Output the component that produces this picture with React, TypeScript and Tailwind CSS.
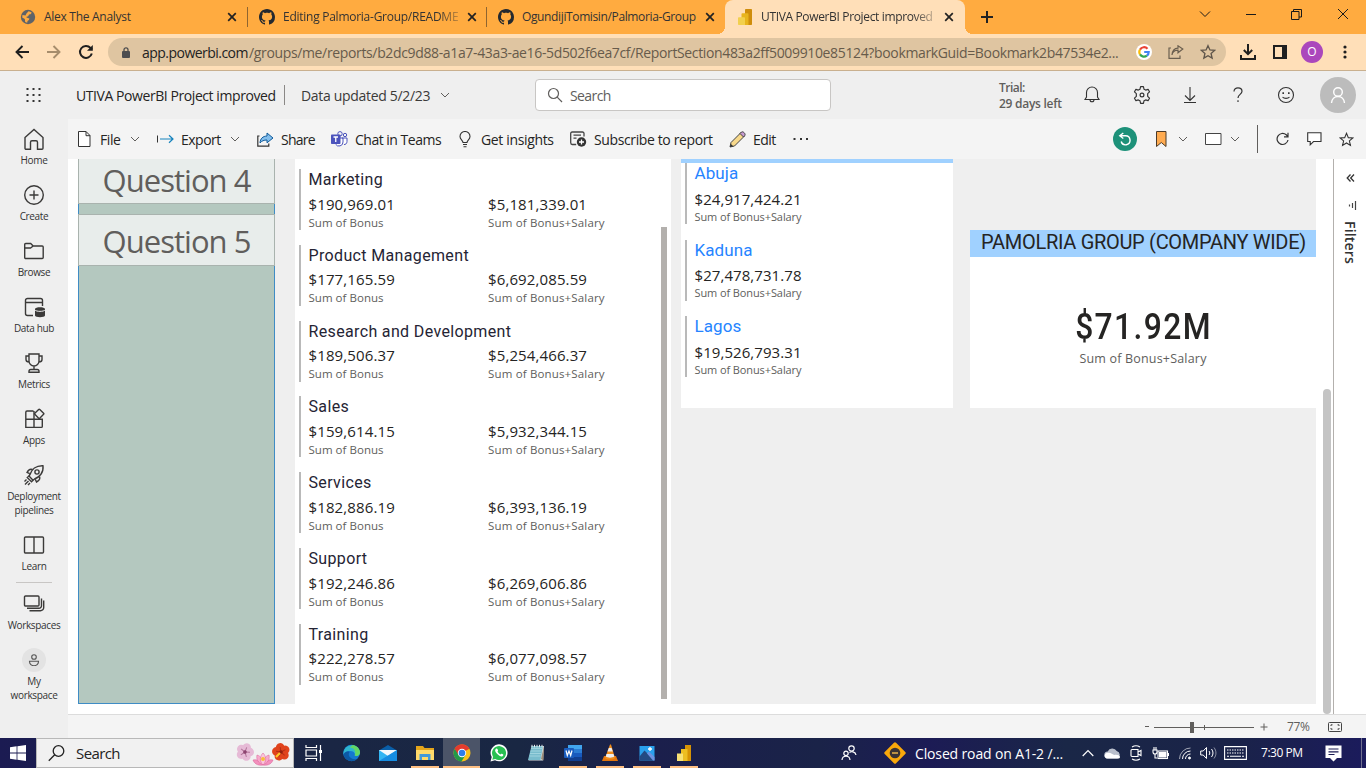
import type { ReactNode } from "react";

type IconProps = { className?: string; size?: number; w?: number; children: ReactNode; box?: string };

/** Stroke icon on a 24-unit grid. */
function Icon({ className = "", size = 20, w = 1.5, box = "0 0 24 24", children }: IconProps) {
  return (
    <svg
      width={size}
      height={size}
      viewBox={box}
      fill="none"
      stroke="currentColor"
      strokeWidth={w}
      className={`shrink-0 ${className}`}
    >
      {children}
    </svg>
  );
}

function Chevron({ className = "" }: { className?: string }) {
  return (
    <svg width="10" height="10" viewBox="0 0 10 10" fill="none" stroke="#605e5c" className={`shrink-0 ${className}`}>
      <path d="M1 3l4 4 4-4" />
    </svg>
  );
}

/* ---------- Browser chrome ---------- */

function GithubMark() {
  return (
    <svg width="16" height="16" viewBox="0 0 16 16" fill="#24292f" className="shrink-0">
      <path d="M8 0C3.58 0 0 3.58 0 8c0 3.54 2.29 6.53 5.47 7.59.4.07.55-.17.55-.38 0-.19-.01-.82-.01-1.49-2.01.37-2.53-.49-2.69-.94-.09-.23-.48-.94-.82-1.13-.28-.15-.68-.52-.01-.53.63-.01 1.08.58 1.23.82.72 1.21 1.87.87 2.33.66.07-.52.28-.87.51-1.07-1.78-.2-3.64-.89-3.64-3.95 0-.87.31-1.59.82-2.15-.08-.2-.36-1.02.08-2.12 0 0 .67-.21 2.2.82.64-.18 1.32-.27 2-.27s1.36.09 2 .27c1.53-1.04 2.2-.82 2.2-.82.44 1.1.16 1.92.08 2.12.51.56.82 1.27.82 2.15 0 3.07-1.87 3.75-3.65 3.95.29.25.54.73.54 1.48 0 1.07-.01 1.93-.01 2.2 0 .21.15.46.55.38A8.01 8.01 0 0 0 16 8c0-4.42-3.58-8-8-8z" />
    </svg>
  );
}

function Globe() {
  return (
    <svg width="16" height="16" viewBox="0 0 16 16" className="shrink-0">
      <circle cx="8" cy="8" r="7.200" fill="#5f6368" />
      <path d="M8.500 2.200c1 .2 2.500.7 3.300 1.600L10.500 5.200 9 5.600l-.8 1.600L6 8l1.700 1 1.700.4-.5 1.600-1.400 1.100-.3 1.700-2-.8L4.800 10 2.200 8.500 2.500 6l3 .4 1-1.800z" fill="#ffab40" />
    </svg>
  );
}

function PowerBi() {
  return (
    <svg width="18" height="18" viewBox="0 0 18 18" className="shrink-0">
      <rect x="9" y="1" width="7" height="16" rx=".8" fill="#cf8d0b" />
      <path d="M5.500 6a.8.8 0 0 1 .8-.8h5.400a.8.8 0 0 1 .8.8v11h-7z" fill="#e8b41d" />
      <path d="M2 10a.8.8 0 0 1 .8-.8h5.400a.8.8 0 0 1 .8.800v7H2.800a.8.800 0 0 1-.8-.8z" fill="#f2d04e" />
    </svg>
  );
}

function CloseX() {
  return (
    <svg width="10" height="10" viewBox="0 0 10 10" stroke="#222" strokeWidth="1.700" className="shrink-0">
      <path d="M1.200 1.200l7.600 7.600M8.800 1.200L1.200 8.800" />
    </svg>
  );
}

const tabText = "ml-[8px] whitespace-nowrap text-[12px] text-[#333333]";

function TabStrip() {
  return (
    <div className="flex h-[34px] items-start bg-[#ffab40]">
      <div className="flex h-[34px] w-[247px] items-center pl-5">
        <Globe />
        <span className={`${tabText} w-[183px] tracking-[-0.28px]`}>Alex The Analyst</span>
        <CloseX />
      </div>
      <div className="mt-[7px] h-5 w-px bg-[#8f6530]" />
      <div className="flex h-[34px] w-[238px] items-center pl-[11px]">
        <GithubMark />
        <span className={`${tabText} w-[176px] tracking-[-0.26px] [mask-image:linear-gradient(to_right,#000_88%,#0004)]`}>
          Editing Palmoria-Group/README
        </span>
        <span className="ml-[8px] flex"><CloseX /></span>
      </div>
      <div className="mt-[7px] h-5 w-px bg-[#8f6530]" />
      <div className="flex h-[34px] w-[238px] items-center rounded-br-[8px] pl-[11px]">
        <GithubMark />
        <span className={`${tabText} w-[175px] tracking-[-0.37px]`}>OgundijiTomisin/Palmoria-Group</span>
        <span className="ml-[8px] flex"><CloseX /></span>
      </div>
      <div className="relative flex h-[34px] w-[240px] items-center rounded-t-[8px] bg-[#ffdfb8] pl-[11px]">
        <span className="absolute bottom-0 -left-2 size-2 bg-[radial-gradient(circle_at_0_0,#ffab40_8px,#ffdfb8_8px)]" />
        <span className="absolute -right-2 bottom-0 size-2 bg-[radial-gradient(circle_at_100%_0,#ffab40_8px,#ffdfb8_8px)]" />
        <PowerBi />
        <span className="ml-[7px] w-[172px] whitespace-nowrap text-[12px] tracking-[-0.35px] text-[#333333] [mask-image:linear-gradient(to_right,#000_88%,#0005)]">
          UTIVA PowerBI Project improved
        </span>
        <span className="ml-[11px] flex"><CloseX /></span>
      </div>
      <svg width="12" height="12" viewBox="0 0 12 12" stroke="#222" strokeWidth="2" className="mt-[11px] ml-4">
        <path d="M6 0v12M0 6h12" />
      </svg>
      <div className="ml-auto flex h-7 items-center pr-[17px] text-[#1a1a1a]">
        <svg width="12" height="12" viewBox="0 0 12 12" fill="none" stroke="currentColor"><path d="M1 3.500l5 5 5-5" /></svg>
        <svg width="10" height="10" viewBox="0 0 10 10" stroke="currentColor" className="ml-[35px]"><path d="M0 5.500h10" /></svg>
        <svg width="11" height="11" viewBox="0 0 11 11" fill="none" stroke="currentColor" className="ml-[35px]"><path d="M.5 2.500h7.500v8H.5zM2.500 2.500v-2h8v7.500H8" /></svg>
        <svg width="12" height="12" viewBox="0 0 12 12" stroke="currentColor" className="ml-[35px]"><path d="M1 1l10 10M11 1L1 11" /></svg>
      </div>
    </div>
  );
}

function GoogleG() {
  return (
    <span className="flex size-4 items-center justify-center rounded-full bg-white">
      <svg width="12" height="12" viewBox="0 0 12 12" fill="none" strokeWidth="2.200">
        <path d="M9.500 2.700A4.700 4.700 0 0 0 2 3.600" stroke="#ea4335" />
        <path d="M2 3.600a4.700 4.700 0 0 0 0 4.800" stroke="#fbbc05" />
        <path d="M2 8.400a4.700 4.700 0 0 0 6.900 1.300" stroke="#34a853" />
        <path d="M8.900 9.700A4.700 4.700 0 0 0 10.700 6H6.200" stroke="#4285f4" />
      </svg>
    </span>
  );
}

function AddressBar() {
  return (
    <div className="flex h-[37px] items-center border-b border-[#c9b08f] bg-[#ffdfb8] pl-[15px]">
      <svg width="14" height="14" viewBox="0 0 14 14" fill="none" stroke="#1f1f1f" strokeWidth="1.900"><path d="M14 7H1.500M7.500 1L1.500 7l6 6" /></svg>
      <svg width="14" height="14" viewBox="0 0 14 14" fill="none" stroke="#a68d6c" strokeWidth="1.900" className="ml-[18px]"><path d="M0 7h12.500M6.500 1l6 6-6 6" /></svg>
      <svg width="16" height="16" viewBox="0 0 16 16" fill="none" stroke="#1f1f1f" strokeWidth="2" className="ml-[17px]">
        <path d="M13.800 9.500A6 6 0 1 1 12.500 3.900L14 5.500" />
        <path d="M14.800 1v5.800H9z" fill="#1f1f1f" stroke="none" />
      </svg>
      <div className="ml-[14px] flex h-7 w-[1118px] items-center rounded-full bg-[#dfc5a1] pl-[14px] text-[14px] text-[#675b4b]">
        <svg width="8" height="11" viewBox="0 0 8 11" className="shrink-0">
          <rect y="4" width="8" height="7" rx="1" fill="#4d4d4f" />
          <path d="M2 4.500V2.800a2 2 0 0 1 4 0v1.700" fill="none" stroke="#4d4d4f" strokeWidth="1.300" />
        </svg>
        <span className="ml-3 w-[107px] whitespace-nowrap tracking-[-0.53px] text-[#222]">app.powerbi.com</span>
        <span className="w-[883px] whitespace-nowrap tracking-[-0.355px]">
          /groups/me/reports/b2dc9d88-a1a7-43a3-ae16-5d502f6ea7cf/ReportSection483a2ff5009910e85124?bookmarkGuid=Bookmark2b47534e2...
        </span>
        <span className="ml-[4px]"><GoogleG /></span>
        <svg width="16" height="14" viewBox="0 0 16 14" fill="none" stroke="#6b5f4f" strokeWidth="1.200" className="ml-4 shrink-0">
          <path d="M3 3H1v10.300h11V10.500M4 10c.3-3 2.500-4.700 6-4.800V7.800L14.800 4 10 .8v2.300C6.300 3.300 4.300 5.800 4 10z" />
        </svg>
        <Icon size={16} w={2} className="ml-4 text-[#5f554a]">
          <path d="M12 2.500l2.900 6.400 7 .7-5.300 4.600 1.600 6.900L12 17.500l-6.200 3.600 1.600-6.900L2.100 9.600l7-.7z" />
        </Icon>
      </div>
      <svg width="16" height="16" viewBox="0 0 16 16" fill="none" stroke="#1f1f1f" strokeWidth="2" className="ml-[14px]">
        <path d="M8 0v10M3.800 6L8 10.200 12.200 6M1 11v4h14v-4" />
      </svg>
      <svg width="14" height="14" viewBox="0 0 14 14" className="ml-[17px]">
        <path d="M1 1h12v12H1z" fill="none" stroke="#1f1f1f" strokeWidth="2" /><path d="M9 1h5v12H9z" fill="#1f1f1f" />
      </svg>
      <span className="ml-[14px] flex size-[22px] items-center justify-center rounded-full bg-[#ab47bc] text-[12px] text-white">O</span>
      <svg width="4" height="14" viewBox="0 0 4 14" fill="#1f1f1f" className="ml-5"><circle cx="2" cy="2" r="1.600" /><circle cx="2" cy="7" r="1.600" /><circle cx="2" cy="12" r="1.600" /></svg>
    </div>
  );
}

/* ---------- Power BI header and bars ---------- */

function AppHeader() {
  return (
    <div className="flex h-12 shrink-0 items-center bg-[#efefef] text-[14px] text-[#252423]">
      <svg width="15" height="15" viewBox="0 0 15 15" fill="#333" className="ml-[26px] shrink-0">
        {[0, 6, 12].map((y) => [0, 6, 12].map((x) => <rect key={`${x}-${y}`} x={x + 0.500} y={y} width="2" height="2" />))}
      </svg>
      <span className="ml-[35px] w-[208px] whitespace-nowrap tracking-[-0.43px]">UTIVA PowerBI Project improved</span>
      <span className="h-5 w-px bg-[#8a8886]" />
      <span className="ml-4 w-[139px] whitespace-nowrap tracking-[-0.32px] text-[#3b3a39]">Data updated 5/2/23</span>
      <Chevron />
      <div className="ml-[85px] flex h-8 w-[296px] items-center rounded border border-[#c8c6c4] bg-white pl-[11px] text-[#605e5c]">
        <Icon size={16} w={1.200} box="0 0 16 16"><circle cx="6.500" cy="6.500" r="5" /><path d="M10.200 10.200l4.800 4.800" /></Icon>
        <span className="ml-[7px] tracking-[-0.6px]">Search</span>
      </div>
      <div className="mt-0.5 ml-[168px] w-[84px] text-[12px] leading-4 font-semibold text-[#605e5c]">
        <p className="tracking-[-0.5px]">Trial:</p>
        <p className="tracking-[-0.27px]">29 days left</p>
      </div>
      <Icon size={18} w={1.100} box="0 0 18 18" className="text-[#333]"><path d="M2 13.500h14L14.500 11V6.500a5.500 5.500 0 0 0-11 0V11zM7 13.700a2 2 0 0 0 4 0" /></Icon>
      <Icon size={20} w={1.400} className="ml-[31px] text-[#333]">
        <path d="M10.300 2h3.400l.7 3 2 1.100 2.900-.9 1.700 3-2.200 2.100v3.400l2.200 2.100-1.700 3-2.900-.9-2 1.100-.7 3h-3.400l-.7-3-2-1.100-2.900.9-1.700-3 2.200-2.100v-3.400L3 8.200l1.700-3 2.900.9 2-1.100z" strokeLinejoin="round" />
        <circle cx="12" cy="12" r="2.300" />
      </Icon>
      <Icon size={18} w={1.100} box="0 0 18 18" className="ml-[29px] text-[#333]"><path d="M9 1v13M4 9.500l5 5 5-5M3 16.500h12" /></Icon>
      <Icon size={18} w={1.200} box="0 0 18 18" className="ml-[30px] text-[#333]"><path d="M5 5.500C5 3 6.800 1.800 9 1.800s4 1.300 4 3.500c0 3-4 3.300-4 6.700M9 14.300v1.800" /></Icon>
      <Icon size={18} w={1.100} box="0 0 18 18" className="ml-[30px] text-[#333]"><circle cx="9" cy="9" r="7.500" /><path d="M5.500 11c1.500 1.800 5.500 1.800 7 0" /><path d="M6.200 6.200v1.700M11.800 6.200v1.700" strokeWidth="1.600" /></Icon>
      <span className="ml-[25px] flex size-9 items-center justify-center rounded-full bg-[#bcbcbc] text-white">
        <Icon size={18} w={1.400} box="0 0 18 18"><circle cx="9" cy="6" r="4.300" /><path d="M2.500 17c.3-4 3-6.500 6.500-6.500s6.200 2.500 6.500 6.500" /></Icon>
      </span>
    </div>
  );
}

function ActionBar() {
  return (
    <div className="flex h-10 shrink-0 items-center bg-[#f4f4f4] pl-2.5 text-[14px] whitespace-nowrap text-[#252423]">
      <svg width="13" height="16" viewBox="0 0 13 16" fill="#fff" stroke="#333" className="shrink-0"><path d="M.5.5h7.500l4 4v11H.5zM8 .5v4.200h4" /></svg>
      <span className="ml-[9px] w-[30px] tracking-[-0.39px]">File</span>
      <Chevron />
      <svg width="17" height="10" viewBox="0 0 17 10" fill="none" className="ml-[17px] shrink-0"><path d="M.5 1.500v7" stroke="#333" /><path d="M3 5h13M12 1.200L16 5l-4 3.800" stroke="#1683bd" strokeWidth="1.200" /></svg>
      <span className="ml-[7px] w-[49px] tracking-[-0.5px]">Export</span>
      <Chevron />
      <svg width="17" height="15" viewBox="0 0 17 15" className="ml-[17px] shrink-0">
        <path d="M2.500 4H.8v10.200h11V11.500" fill="none" stroke="#333" strokeWidth="1.200" />
        <path d="M3 11C3.300 6.500 5.800 4.200 10 4V1l6 5-6 4.800V8C7 8 4.800 8.800 3 11z" fill="#83beec" stroke="#0f5a9a" />
      </svg>
      <span className="ml-[7px] w-[50px] tracking-[-0.75px]">Share</span>
      <svg width="17" height="16" viewBox="0 0 17 16" className="shrink-0">
        <circle cx="14" cy="4" r="1.700" fill="none" stroke="#4b53bc" /><circle cx="9" cy="2.800" r="2.200" fill="#f4f4f4" stroke="#4b53bc" />
        <path d="M11 7h5v3.500c0 2-1.500 3.200-3 3M4 7h8v4a4 4 0 0 1-7.500 2" fill="#fff" stroke="#4b53bc" />
        <rect y="3.500" width="9.500" height="9.500" rx=".8" fill="#4b53bc" /><path d="M2.500 6h4.500M4.750 6v5" stroke="#fff" strokeWidth="1.300" />
      </svg>
      <span className="ml-[7px] w-[104px] tracking-[-0.5px]">Chat in Teams</span>
      <svg width="12" height="17" viewBox="0 0 12 17" fill="none" stroke="#333" strokeWidth="1.100" className="shrink-0"><path d="M4 11.500C4 9.500 1 8.500 1 5.500a5 5 0 0 1 10 0c0 3-3 4-3 6zM4 13.500h4M4.500 15.800h3" /></svg>
      <span className="ml-[10px] w-[89px] tracking-[-0.35px]">Get insights</span>
      <svg width="17" height="16" viewBox="0 0 17 16" fill="none" stroke="#444" strokeWidth="1.300" className="shrink-0">
        <path d="M14 5.500V2.500a1.500 1.500 0 0 0-1.500-1.500H2A1.500 1.500 0 0 0 .7 2.500v9c0 1 .6 2 1.500 2h4M3.500 4.200h7.500M3.500 7.200h3" />
        <circle cx="11.500" cy="11" r="4.700" fill="#333" stroke="none" /><path d="M11.500 8.500v5M9 11h5" stroke="#fff" />
      </svg>
      <span className="ml-[7px] w-[135px] tracking-[-0.38px]">Subscribe to report</span>
      <svg width="17" height="17" viewBox="0 0 17 17" className="shrink-0">
        <path d="M1 16l1-4.500L12 1.500l3.500 3.500-10 10z" fill="#f8d98b" stroke="#444" /><path d="M11 2.500l1.500-1.500c1.500-1 4.500 1.800 3.300 3.500L14.500 6z" fill="#c79bd0" stroke="#444" /><path d="M1 16l.7-3.300 2.600 2.600z" fill="#333" />
      </svg>
      <span className="ml-[7px] w-[40px] tracking-[-0.55px]">Edit</span>
      <svg width="16" height="4" viewBox="0 0 16 4" fill="#333" className="shrink-0"><rect x=".5" y="1" width="2" height="2" /><rect x="7" y="1" width="2" height="2" /><rect x="13" y="1" width="2" height="2" /></svg>
      <div className="ml-auto flex h-full items-center pr-3">
        <span className="flex size-6 items-center justify-center rounded-full bg-[#1d9179]">
          <svg width="14" height="14" viewBox="0 0 14 14" fill="none" stroke="#fff" strokeWidth="1.400"><path d="M5.300 1L1.800 3.800l3.500 2.700M2 3.800h5.500a4.500 4.500 0 1 1-4.300 5.700" /></svg>
        </span>
        <svg width="11" height="17" viewBox="0 0 11 17" className="ml-[19px]"><path d="M.5.500h9.500v15l-4.700-4-4.800 4z" fill="#ffab50" stroke="#4b3a28" /></svg>
        <Chevron className="ml-[11px]" />
        <svg width="17" height="12" viewBox="0 0 17 12" fill="#fff" stroke="#444" className="ml-[17px]"><path d="M.5.5h15.500v11H.5z" /></svg>
        <Chevron className="ml-2" />
        <span className="ml-[17px] h-7 w-px bg-[#605e5c]" />
        <svg width="13" height="14" viewBox="0 0 13 14" fill="none" stroke="#333" strokeWidth="1.200" className="ml-[18px]"><path d="M12 8a5.500 5.500 0 1 1-1.800-5.200L12 4.500M12 .8v4H8" /></svg>
        <svg width="15" height="14" viewBox="0 0 15 14" fill="#fff" stroke="#333" strokeWidth="1.100" className="ml-[18px]"><path d="M.7.700h13.300v8.800H6.500L3.200 12.800V9.500H.7z" /></svg>
        <Icon size={15} w={1.700} className="ml-[17px] text-[#333]"><path d="M12 2l2.900 7 7.300.5-5.600 4.800 1.700 7.200L12 17.500l-6.300 4 1.700-7.200L1.800 9.500 9.100 9z" /></Icon>
      </div>
    </div>
  );
}

/* ---------- Left navigation ---------- */

const navIcons = {
  home: <path d="M2 9.500L11 1.500l9 8v10.700a1 1 0 0 1-1 1H14.500v-7a1.500 1.500 0 0 0-1.500-1.500H9a1.500 1.500 0 0 0-1.500 1.500v7H3a1 1 0 0 1-1-1z" />,
  create: <><circle cx="11" cy="11" r="9.300" /><path d="M11 6.500v9M6.500 11h9" /></>,
  browse: <path d="M1.700 17.500v-13a1 1 0 0 1 1-1h5l2.500 2.500h9a1 1 0 0 1 1 1v10.500a1 1 0 0 1-1 1H2.700a1 1 0 0 1-1-1zM1.700 8h5.800l2.700-2" />,
  data: <><path d="M19.500 10V4.500A2 2 0 0 0 17.500 2.500h-13a2 2 0 0 0-2 2v13a2 2 0 0 0 2 2H10M2.500 6.500h17" /><path d="M12 13c0-2.300 10-2.300 10 0v6.500c0 2.300-10 2.300-10 0z" fill="currentColor" stroke="none" /><path d="M12 14c1 1.800 9 1.800 10 0" stroke="#efefef" strokeWidth="1" /></>,
  metrics: <path d="M6 2h10v7a5 5 0 0 1-10 0zM6 4H3v3.500C3 9.500 4.500 10 6.300 10M16 4h3v3.500c0 2-1.500 2.500-3.300 2.500M11 14v3.500M6 20.300v-1a1.800 1.800 0 0 1 1.800-1.800h6.400a1.800 1.800 0 0 1 1.800 1.800v1z" />,
  apps: <><path d="M10.500 3H4a1.200 1.200 0 0 0-1.200 1.200v15.200h15.500a1 1 0 0 0 1-1v-7.200H2.800M11 3v16.400" /><rect x="12.700" y="2.300" width="7" height="7" rx=".8" transform="rotate(45 16.200 5.800)" fill="#efefef" /></>,
  rocket: <>
    <path d="M7 10.500C8.500 5.500 13 1.500 20 1.800c.8 6.700-3.500 11.500-8.500 13.200L10 16.200 6 12z" />
    <path d="M9.500 5.500C7 4.500 5.500 5.500 4 8.500L6.800 9.700M16.500 12.500c1 2.500 0 4-3 5.500l-1.200-2.800M6 12l-1.700 1.500L8.500 17.700 10 16.200" />
    <path d="M3.500 15.500l-2 2M5.500 17L2 20.500M7 19l-2 2" /><circle cx="14" cy="8" r="2.100" />
  </>,
  learn: <path d="M1.500 4a1 1 0 0 1 1-1H11v16H2.500a1 1 0 0 1-1-1zM11 3h8.500a1 1 0 0 1 1 1v14a1 1 0 0 1-1 1H11zM11 3v16" />,
  spaces: <path d="M1.500 4a1 1 0 0 1 1-1H15a1 1 0 0 1 1 1v8a1 1 0 0 1-1 1H2.500a1 1 0 0 1-1-1zM4 15.300h12a2.500 2.500 0 0 0 2.500-2.500V5.500M6.500 17.800H17.500a3.200 3.200 0 0 0 3.200-3.200V7.500" />,
};

function NavItem({ icon, lines }: { icon: keyof typeof navIcons; lines: string[] }) {
  return (
    <div className="flex flex-col items-center pt-[9px] pb-2 text-[10px] leading-[14px] text-[#333]">
      <Icon size={22} w={1.400} box="0 0 22 22" className="mb-[3px] text-[#3b3a39]">{navIcons[icon]}</Icon>
      {lines.map((l) => <span key={l} className="tracking-[-0.35px]">{l}</span>)}
    </div>
  );
}

function SideNav() {
  return (
    <nav className="w-[68px] shrink-0 bg-[#efefef]">
      <NavItem icon="home" lines={["Home"]} />
      <NavItem icon="create" lines={["Create"]} />
      <NavItem icon="browse" lines={["Browse"]} />
      <NavItem icon="data" lines={["Data hub"]} />
      <NavItem icon="metrics" lines={["Metrics"]} />
      <NavItem icon="apps" lines={["Apps"]} />
      <NavItem icon="rocket" lines={["Deployment", "pipelines"]} />
      <NavItem icon="learn" lines={["Learn"]} />
      <div className="mx-auto mt-px mb-px h-px w-9 bg-[#c8c6c4]" />
      <NavItem icon="spaces" lines={["Workspaces"]} />
      <div className="flex flex-col items-center pt-2 text-[10px] leading-[14px] tracking-[-0.35px] text-[#333]">
        <span className="mb-[2px] flex size-6 items-center justify-center rounded-full bg-[#e3e3e3] text-[#555]">
          <Icon size={12} w={1.100} box="0 0 12 12"><circle cx="6" cy="3" r="2.300" /><path d="M1.500 7.200h9c.3 6-9.300 6-9 0z" /></Icon>
        </span>
        <span>My</span>
        <span>workspace</span>
      </div>
    </nav>
  );
}

/* ---------- Report canvas ---------- */

const departments = [
  ["Marketing", "$190,969.01", "$5,181,339.01"],
  ["Product Management", "$177,165.59", "$6,692,085.59"],
  ["Research and Development", "$189,506.37", "$5,254,466.37"],
  ["Sales", "$159,614.15", "$5,932,344.15"],
  ["Services", "$182,886.19", "$6,393,136.19"],
  ["Support", "$192,246.86", "$6,269,606.86"],
  ["Training", "$222,278.57", "$6,077,098.57"],
];

const cities = [
  ["Abuja", "$24,917,424.21"],
  ["Kaduna", "$27,478,731.78"],
  ["Lagos", "$19,526,793.31"],
];

function QuestionPanel() {
  return (
    <div className="flex w-[197px] shrink-0 flex-col border-x border-b border-[#3f8cc5] bg-[#b4c8bf] text-center text-[31px] tracking-[-0.96px] text-[#605e5c]">
      <div className="-mx-px h-[45px] border-x border-b border-[#a9b3ae] bg-[#e8edeb] leading-[42px]">Question 4</div>
      <div className="-mx-px mt-[10px] h-[52px] border-x border-y border-[#a9b3ae] bg-[#e8edeb] leading-[53px]">Question 5</div>
    </div>
  );
}

function DepartmentCard() {
  return (
    <div className="ml-5 flex w-[376px] shrink-0 bg-white pt-2.5">
      <div className="w-[366px] pl-1">
        {departments.map(([name, bonus, total]) => (
          <div key={name} className="h-[75.830px]">
            <div className="h-[61px] border-l-2 border-[#b9b9b9] pl-[7.500px]">
              <h3 className="font-['Roboto'] text-[16px] leading-[21px] tracking-[0.35px] text-[#252434]">{name}</h3>
              <div className="mt-[3.500px] flex text-[15px] leading-5 tracking-[0.12px] text-[#252423]">
                <span className="w-[179.500px]">{bonus}</span>
                <span>{total}</span>
              </div>
              <div className="mt-px flex text-[11.500px] leading-4 tracking-[0.16px] text-[#605e5c]">
                <span className="w-[179.500px] tracking-[0.03px]">Sum of Bonus</span>
                <span>Sum of Bonus+Salary</span>
              </div>
            </div>
          </div>
        ))}
      </div>
      <div className="mt-[58px] h-[472px] w-[6px] bg-[#b3b0ad]" />
    </div>
  );
}

function CityCard() {
  return (
    <div className="ml-2.5 h-[249px] w-[272px] shrink-0 border-t-4 border-[#a0d1ff] bg-white pl-1">
      {cities.map(([name, total]) => (
        <div key={name} className="h-[76.500px]">
          <div className="h-[61px] border-l-2 border-[#b9b9b9] pl-[7.500px]">
            <h3 className="font-['Roboto'] text-[17px] leading-[21px] tracking-[0.1px] text-[#2684ff]">{name}</h3>
            <p className="mt-[4.700px] text-[15px] leading-5 tracking-[0.07px] text-[#252423]">{total}</p>
            <p className="mt-[0.300px] text-[11px] leading-[15px] tracking-[-0.1px] text-[#605e5c]">Sum of Bonus+Salary</p>
          </div>
        </div>
      ))}
    </div>
  );
}

function CompanyCard() {
  return (
    <div className="mt-[71px] ml-[17px] flex h-[178px] w-[346px] shrink-0 flex-col items-center bg-white">
      <h2 className="flex h-[27px] w-full justify-center bg-[#a0d1ff] pl-px font-['Roboto'] text-[20px] leading-[25px] tracking-[-0.3px] whitespace-nowrap text-[#252423]">
        PAMOLRIA GROUP (COMPANY WIDE)
      </h2>
      <p className="mt-[46px] scale-x-[0.860] font-['Roboto'] text-[37px] leading-[48px] font-medium tracking-[1.600px] text-[#252423]">$71.92M</p>
      <p className="text-[12.500px] leading-4 tracking-[0.19px] text-[#605e5c]">Sum of Bonus+Salary</p>
    </div>
  );
}

function FiltersRail() {
  return (
    <aside className="flex w-[33px] shrink-0 flex-col items-center border-l border-[#b3b0ad] bg-white pt-[14px] text-[#333]">
      <svg width="9" height="10" viewBox="0 0 9 10" fill="none" stroke="currentColor" strokeWidth="1.300"><path d="M4.500 1.500L1.200 5l3.300 3.500M8 1.500L4.700 5 8 8.500" /></svg>
      <svg width="10" height="10" viewBox="0 0 10 10" stroke="#444" strokeWidth="1.200" className="mt-[18px] ml-1"><path d="M8.500 0v9M5.500 2v5M2.500 3.500v2" /></svg>
      <span className="mt-[10px] text-[14px] leading-[18px] font-semibold tracking-[0.2px] [writing-mode:vertical-rl]">Filters</span>
    </aside>
  );
}

function Canvas() {
  return (
    <div className="flex min-h-0 flex-1 bg-white">
      <div className="ml-2.5 flex w-[1238px] shrink-0 overflow-hidden">
        <div className="flex h-[545px] flex-1 bg-[#efefef]">
          <QuestionPanel />
          <DepartmentCard />
          <CityCard />
          <CompanyCard />
        </div>
      </div>
      <div className="flex flex-1 items-end justify-end pr-0.5">
        <div className="h-[325px] w-2 rounded bg-[#c4c4c4]" />
      </div>
      <FiltersRail />
    </div>
  );
}

function ZoomBar() {
  return (
    <div className="flex h-6 shrink-0 items-center justify-end border-t border-[#dcdcdc] bg-[#f4f4f4] pr-6 text-[12px] text-[#605e5c]">
      <span className="mr-[5px] h-[1.500px] w-1 bg-[#605e5c]" />
      <svg width="100" height="12" viewBox="0 0 100 12"><path d="M0 6.500h100" stroke="#605e5c" /><path d="M50.500 4v5" stroke="#605e5c" /><rect x="36" y="1" width="4" height="11" fill="#605e5c" /></svg>
      <svg width="8" height="8" viewBox="0 0 8 8" stroke="#605e5c" className="ml-[6px]"><path d="M4 .5v7M.5 4h7" /></svg>
      <span className="ml-[19px] w-[41px] tracking-[-0.3px]">77%</span>
      <svg width="14" height="10" viewBox="0 0 14 10" fill="none" stroke="#444"><rect x=".5" y=".5" width="13" height="9" rx="1" /><path d="M3 4V2.800h1.500M3 6v1.200h1.500M11 4V2.800H9.500M11 6v1.200H9.500" /></svg>
    </div>
  );
}

/* ---------- Taskbar ---------- */

function TaskIcon({ open, active, children }: { open?: boolean; active?: boolean; children: ReactNode }) {
  return (
    <div className={`flex h-full w-[37px] flex-col items-center ${active ? "bg-[#4b5468]" : ""}`}>
      <svg width="18" height="18" viewBox="0 0 18 18" className="mt-[6px] mb-1">{children}</svg>
      {open && <div className={`h-0.5 bg-[#ffc083] ${active ? "w-full" : "w-7"}`} />}
    </div>
  );
}

function Flower({ color, core, rotate = 0 }: { color: string; core: string; rotate?: number }) {
  return (
    <g transform={`rotate(${rotate})`}>
      {[0, 72, 144, 216, 288].map((a) => (
        <ellipse key={a} cy="-4.800" rx="4.300" ry="4.200" fill={color} transform={`rotate(${a})`} />
      ))}
      {[0, 72, 144, 216, 288].map((a) => (
        <path key={a} d="M0 0V-5" stroke={core} strokeWidth="1" opacity=".6" transform={`rotate(${a})`} />
      ))}
      <circle r="1.800" fill={core} />
    </g>
  );
}

function Flowers() {
  return (
    <svg width="56" height="28" viewBox="0 0 56 28" className="mr-0.5 ml-auto">
      <g transform="translate(10 13)"><Flower color="#e6bad6" core="#8d4470" rotate={20} /></g>
      <g transform="translate(46 13)"><Flower color="#e0431c" core="#96200e" rotate={-10} /><path d="M-1 1l-4 4" stroke="#ffc928" strokeWidth="2.200" /></g>
      <g fill="#f390bd" stroke="#d95c95" strokeWidth=".5">
        <path d="M28 26c-6 1-9-2-10-5 4-1 8 1 10 5zM28 26c6 1 9-2 10-5-4-1-8 1-10 5z" />
        <path d="M28 26c-5-2-7-6-6-10 4 1 6 5 6 10zM28 26c5-2 7-6 6-10-4 1-6 5-6 10z" fill="#f7a9cb" />
        <path d="M28 26c-4-4-3-9 0-12 3 3 4 8 0 12z" fill="#fbc6dc" />
      </g>
      <circle cx="28" cy="20" r="2" fill="#f6bd3b" />
    </svg>
  );
}

function Taskbar() {
  return (
    <div className="flex h-[30px] shrink-0 items-stretch bg-[linear-gradient(90deg,#1b1b52_0,#1a2644_24%,#192743_38%,#1b1f4c_48%,#1a2348_60%,#1c1b55_68%,#1a2747_78%,#1a2348_90%,#1b1b5c_100%)] text-white">
      <div className="flex w-9 items-center justify-center">
        <svg width="16" height="16" viewBox="0 0 16 16" fill="#fff"><path d="M0 2.200l6.600-.9v6.300H0zM7.400 1.200L16 0v7.600H7.400zM0 8.400h6.600v6.300L0 13.800zM7.400 8.400H16V16l-8.600-1.200z" /></svg>
      </div>
      <div className="mr-px flex w-[258px] items-center border border-[#b8b8b8] bg-[#f1f1f1] pl-[11px] text-[15px] text-[#222]">
        <svg width="17" height="17" viewBox="0 0 17 17" fill="none" stroke="#222" strokeWidth="1.300"><circle cx="10.500" cy="6" r="5.300" /><path d="M6.700 9.800L.8 15.800" /></svg>
        <span className="ml-[11px] tracking-[-0.6px]">Search</span>
        <Flowers />
      </div>
      <TaskIcon><g fill="none" stroke="#fff" strokeWidth="1.200"><path d="M1 1v2.500h10.500V1M1 17v-2.500h10.500V17M1 6h10.500v6H1zM15.500 1v16" /><rect x="14" y="6" width="3" height="3" fill="#fff" stroke="none" /></g></TaskIcon>
      <TaskIcon>
        <circle cx="9.500" cy="9" r="8.300" fill="#1478d0" />
        <path d="M1.500 8A8.400 8.400 0 0 1 18 8c.3 3-2 4.500-5 4 .5-3-1.500-5-5-5C4 7 2 9 1.300 11z" fill="#2fb6cf" />
        <path d="M11 .9A8.400 8.400 0 0 1 18 8.500c0 2.800-3 4.200-5.500 3C14 9 13.500 4 8 3.500 9 2 10 1.300 11 .9z" fill="#62d765" />
        <path d="M7.500 8c-2 3 0 7.500 7 7.500-5 3.500-11.500.7-12.900-4.500C2 8.500 5 6.700 7.500 8z" fill="#0c59a4" />
      </TaskIcon>
      <TaskIcon><path d="M0 6.500L9 1l9 5.500z" fill="#0a5ea8" /><path d="M0 6h18v11H0z" fill="#32b5f3" /><path d="M0 6h18l-9 6z" fill="#f2f8fc" /><path d="M0 17l18-11v11z" fill="#168de2" /></TaskIcon>
      <TaskIcon open><path d="M0 2h7l1.500 2H18v12H0z" fill="#e4a51b" /><path d="M0 6h18v10H0z" fill="#ffda6b" /><path d="M3.500 16v-6h11v6H12v-3H6v3z" fill="#4299da" /></TaskIcon>
      <TaskIcon open active>
        <circle cx="9" cy="9" r="8.500" fill="#fbc116" />
        <path d="M9 9L1.640 4.750A8.500 8.500 0 0 1 16.360 4.750z" fill="#e33b2e" /><path d="M9 9L1.640 4.750A8.500 8.500 0 0 0 8.500 17.500L12.500 11z" fill="#229a48" /><path d="M9 5h7.500a8.500 8.500 0 0 0-14.860-.25L5.500 11z" fill="#e33b2e" />
        <circle cx="9" cy="9" r="4.200" fill="#fff" /><circle cx="9" cy="9" r="3.300" fill="#2f7de9" />
      </TaskIcon>
      <TaskIcon><path d="M.5 17.500l1.200-4.400A8.500 8.500 0 1 1 5 16.300z" fill="#fff" /><path d="M2.300 15.700l.8-2.900A7 7 0 1 1 5.300 15z" fill="#28c052" /><path d="M6 4.700c-1.500 1-1 3 1 5s4 3.200 5.500 2.500c1.200-.7 1.200-1.500 0-2.100-1.300-.7-1.300-.5-2 .3-1.200-.3-2.600-1.700-3-2.800.9-.9.6-1 .2-2-.5-1-.9-1.300-1.700-.9z" fill="#fff" /></TaskIcon>
      <TaskIcon><path d="M5 2h12l-1 14.500H1.500z" fill="#d9dedf" /><path d="M4.500 2h11.500l-2.500 14H1z" fill="#79bccd" /><path d="M4 4.500h11M3.500 7h11M3 9.500h11M2.700 12h11" stroke="#b9e2ea" strokeWidth=".6" /><path d="M5 .8v2.500M7.500.8v2.500M10 .8v2.500M12.500.8v2.500M15 .8v2.500" stroke="#e8eef0" /><path d="M14 15l3-13-.5 14.500z" fill="#9a8c78" /></TaskIcon>
      <TaskIcon open><rect x="4" y="1" width="14" height="16" rx="1" fill="#2b7cd3" /><path d="M4 1h14v4H4z" fill="#41a5ee" /><path d="M4 9h14v4H4z" fill="#185abd" /><path d="M4 13h14v4H4z" fill="#103f91" /><rect y="4" width="10" height="10" rx="1" fill="#1a5dbe" /><path d="M2 6.500l1.300 5L5 7l1.700 4.500L8 6.500" fill="none" stroke="#fff" strokeWidth="1.200" /></TaskIcon>
      <TaskIcon open><path d="M3 12h12l2 5H1z" fill="#e3750c" /><path d="M9 .5L4 14c2 2 8 2 10 0L10 .5z" fill="#f28e1c" /><path d="M7.800 4h2.800l1.200 3.500H6.500zM5.500 10h7l.8 2.500c-2 1.500-6.500 1.500-8.500 0z" fill="#eee" /></TaskIcon>
      <TaskIcon open><path d="M1.500 2h15v14.500h-15z" fill="#2aa0ec" /><path d="M1.500 12.500l5-6 10 10h-15z" fill="#234a82" /><path d="M9 9.500l2-2 5.500 5.500v3.500H15z" fill="#6e92e0" /><path d="M12 3v4M10 5h4" stroke="#fff" strokeWidth="1.300" /></TaskIcon>
      <TaskIcon open><rect x="10" y="1" width="6" height="16" fill="#d69305" /><rect x="6" y="5" width="6.500" height="12" fill="#edbe22" /><rect x="2" y="9.500" width="6" height="7.500" fill="#f8e175" /></TaskIcon>

      <div className="ml-auto flex items-center">
        <svg width="16" height="16" viewBox="0 0 16 16" fill="none" stroke="#fff" strokeWidth="1.200"><circle cx="10.500" cy="3.500" r="2.700" /><path d="M8.500 7.500C10 6.200 14.500 6.500 15 10M7 9.500" /><circle cx="5" cy="8.300" r="2.200" /><path d="M1 15c.3-5 7.700-5 8 0" /></svg>
        <svg width="24" height="24" viewBox="0 0 24 24" className="ml-[26px]"><rect x="4" y="4" width="16" height="16" rx="1.500" transform="rotate(45 12 12)" fill="#f9a80b" /><circle cx="12" cy="12" r="5.300" fill="#3a3333" /><path d="M9 12h6" stroke="#e8b34b" strokeWidth="1.500" /></svg>
        <span className="ml-[8px] w-[167px] text-[14px] whitespace-nowrap tracking-[-0.14px]">Closed road on A1-2 /...</span>
        <svg width="12" height="8" viewBox="0 0 12 8" fill="none" stroke="#fff" strokeWidth="1.200"><path d="M.7 7L6 1.500 11.300 7" /></svg>
        <svg width="17" height="11" viewBox="0 0 17 11" className="ml-[10px]"><path d="M4 10.500a3.500 3.500 0 0 1-.3-7 5 5 0 0 1 9-.5 4 4 0 0 1 .8 7.500z" fill="#b9bfcc" /><path d="M3.500 10.500C-.5 10-.3 5 4 4.800c3-.3 4.500 1.700 6.500 2.200 2-.5 5.500.2 5.500 2 0 1-1 1.500-2 1.500z" fill="#fff" /></svg>
        <svg width="13" height="16" viewBox="0 0 13 16" fill="none" stroke="#fff" strokeWidth="1.100" className="ml-[9px]"><path d="M1 5.500a1 1 0 0 1 1-1h6v7H2a1 1 0 0 1-1-1zM8 7l3-1.500v5L8 9M2 2c2.500-1.500 5.500-1.500 8 0M2 14c2.500 1.500 5.500 1.500 8 0" /></svg>
        <svg width="17" height="13" viewBox="0 0 17 13" fill="none" stroke="#fff" strokeWidth="1.100" className="ml-[9px]"><path d="M1 3h4v2a2 2 0 0 1-4 0zM2 0v3M4 0v3M3 7v4h2" /><rect x="6" y="4" width="9.500" height="7.500" /><rect x="7.500" y="5.500" width="6.500" height="4.500" fill="#fff" /><path d="M16.500 6v3" /></svg>
        <svg width="14" height="14" viewBox="0 0 14 14" fill="none" stroke="#fff" className="ml-[9px]"><path d="M7.500 13a5 5 0 0 1 5-5M4.500 13a8 8 0 0 1 8-8" /><path d="M1.500 13a11 11 0 0 1 11-11" opacity=".6" /><circle cx="11.500" cy="12" r="1" fill="#fff" /></svg>
        <svg width="17" height="14" viewBox="0 0 17 14" fill="none" stroke="#fff" className="ml-2"><path d="M.7 5h2.500L6.500 1.500v11L3.200 9H.7zM9 5c1 1.200 1 2.800 0 4M11.500 3c2 2.500 2 5.500 0 8" /><path d="M14 1.500c2.600 3.500 2.600 7.500 0 11" opacity=".5" /></svg>
        <svg width="23" height="14" viewBox="0 0 23 14" fill="none" stroke="#fff" strokeWidth="1.100" className="ml-[7px]"><path d="M.6.6h21.800v12.800H.6z" /><path d="M3 4h17M3 7h17" strokeDasharray="1.500 1" /><path d="M3 10.300h2M6 10.300h11M18 10.300h2" /></svg>
        <span className="ml-[14px] w-14 text-[12px] whitespace-nowrap tracking-[-0.45px]">7:30 PM</span>
        <svg width="17" height="17" viewBox="0 0 17 17" className="ml-[8px]"><path d="M.5.500h16v12.500h-4.500l-3.500 3.500L5 13H.5z" fill="#fff" /><path d="M3.500 4h10M3.500 6.800h10M3.500 9.500h6" stroke="#1b1b52" strokeWidth="1.200" /></svg>
        <span className="mr-1 ml-[19px] h-[30px] w-px bg-[#70708f]" />
      </div>
    </div>
  );
}

export default function App() {
  return (
    <div className="flex h-[768px] w-[1366px] flex-col overflow-hidden bg-white font-['Open_Sans','Noto_Sans',sans-serif]">
      <TabStrip />
      <AddressBar />
      <AppHeader />
      <div className="flex min-h-0 flex-1">
        <SideNav />
        <main className="flex min-w-0 flex-1 flex-col">
          <ActionBar />
          <Canvas />
          <ZoomBar />
        </main>
      </div>
      <Taskbar />
    </div>
  );
}
